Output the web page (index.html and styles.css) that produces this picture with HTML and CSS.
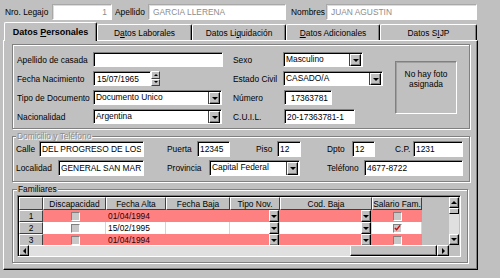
FILE: index.html
```html
<!DOCTYPE html>
<html lang="es">
<head>
  <meta charset="UTF-8" />
  <meta name="viewport" content="width=device-width, initial-scale=1.0"/>
  <title>Legajo - Datos Personales</title>
  <link rel="stylesheet" href="styles.css">
</head>
<body>

  <!-- CABECERA -->
  <div class="header">
    <label class="lbl lbl-legajo">Nro. Legajo</label>
    <input class="field field-off w-legajo" value="1" readonly />
    <label class="lbl lbl-apellido">Apellido</label>
    <input class="field field-off w-apellido" value="GARCIA LLERENA" readonly />
    <label class="lbl lbl-nombres">Nombres</label>
    <input class="field field-off w-nombres" value="JUAN AGUSTIN" readonly />
  </div>

  <!-- SOLAPAS -->
  <div class="tabs">
    <div class="tab active t-personales"><span>Datos <u>P</u>ersonales</span></div>
    <div class="tab t-laborales"><span>D<u>a</u>tos Laborales</span></div>
    <div class="tab t-liquidacion"><span>Datos Li<u>q</u>uidación</span></div>
    <div class="tab t-adicionales"><span><u>D</u>atos Adicionales</span></div>
    <div class="tab t-sijp"><span>Datos S<u>I</u>JP</span></div>
  </div>

  <div class="panel">

    <!-- DATOS GENERALES -->
    <div class="group group-main">
      <div class="col col-left">
        <div class="row">
          <label class="lbl w-lbl-left">Apellido de casada</label>
          <input class="field w-casada" value="" />
        </div>
        <div class="row">
          <label class="lbl w-lbl-left">Fecha Nacimiento</label>
          <input class="field w-fecha" value="15/07/1965" />
          <div class="spin">
            <span class="sbtn up"></span>
            <span class="sbtn down"></span>
          </div>
        </div>
        <div class="row">
          <label class="lbl w-lbl-left">Tipo de Documento</label>
          <div class="combo w-doc"><span>Documento Unico</span><i class="drop"></i></div>
        </div>
        <div class="row">
          <label class="lbl w-lbl-left">Nacionalidad</label>
          <div class="combo w-doc"><span>Argentina</span><i class="drop"></i></div>
        </div>
      </div>

      <div class="col col-right">
        <div class="row">
          <label class="lbl w-lbl-right">Sexo</label>
          <div class="combo w-sexo"><span>Masculino</span><i class="drop"></i></div>
        </div>
        <div class="row">
          <label class="lbl w-lbl-right">Estado Civil</label>
          <div class="combo w-civil"><span>CASADO/A</span><i class="drop"></i></div>
        </div>
        <div class="row">
          <label class="lbl w-lbl-right">Número</label>
          <input class="field w-numero" value="17363781" />
        </div>
        <div class="row">
          <label class="lbl w-lbl-right">C.U.I.L.</label>
          <input class="field w-cuil" value="20-17363781-1" />
        </div>
      </div>

      <div class="photo">No hay foto<br>asignada</div>
    </div>

    <!-- DOMICILIO -->
    <div class="group group-dom">
      <div class="legend off">Domicilio y Teléfono</div>
      <div class="row row-dom">
        <label class="lbl w-calle">Calle</label>
        <input class="field w-calle-in" value="DEL PROGRESO DE LOS" />
        <label class="lbl w-puerta">Puerta</label>
        <input class="field w-puerta-in" value="12345" />
        <label class="lbl w-piso">Piso</label>
        <input class="field w-piso-in" value="12" />
        <label class="lbl w-dpto">Dpto</label>
        <input class="field w-dpto-in" value="12" />
        <label class="lbl w-cp">C.P.</label>
        <input class="field w-cp-in" value="1231" />
      </div>
      <div class="row row-dom">
        <label class="lbl w-localidad">Localidad</label>
        <input class="field w-localidad-in" value="GENERAL SAN MAR" />
        <label class="lbl w-provincia">Provincia</label>
        <div class="combo w-provincia-in"><span>Capital Federal</span><i class="drop"></i></div>
        <label class="lbl w-telefono">Teléfono</label>
        <input class="field w-telefono-in" value="4677-8722" />
      </div>
    </div>

    <!-- FAMILIARES -->
    <div class="group group-fam">
      <div class="legend">Familiares</div>
      <div class="grid">
        <div class="grid-main">
          <div class="grid-body" id="grid-body">
            <div class="grid-row head">
              <div class="cell hcell c0"></div>
              <div class="cell hcell c1">Discapacidad</div>
              <div class="cell hcell c2">Fecha Alta</div>
              <div class="cell hcell c3">Fecha Baja</div>
              <div class="cell hcell c4">Tipo Nov.</div>
              <div class="cell hcell c5">Cod. Baja</div>
              <div class="cell hcell c6">Salario Fam.</div>
            </div>
          </div>
          <div class="vscroll">
            <span class="sb sb-up"></span>
            <span class="sb-thumb-v"></span>
            <span class="sb-track"></span>
            <span class="sb sb-down"></span>
          </div>
        </div>
        <div class="grid-foot">
          <div class="hscroll">
            <span class="sb sb-left"></span>
            <span class="sb-track h-track"></span>
            <span class="sb-thumb-h"></span>
            <span class="sb sb-right"></span>
          </div>
          <div class="corner"></div>
        </div>
      </div>
    </div>

  </div>

  <script>
    const familiares = [
      { nro: 1, alta: '01/04/1994', salario: false, color: 'pink' },
      { nro: 2, alta: '15/02/1995', salario: true, color: 'white' },
      { nro: 3, alta: '01/04/1994', salario: false, color: 'pink' },
    ];

    function checkBox(checked) {
      const mark = checked
        ? '<svg width="8" height="8" viewBox="0 0 8 8"><path d="M1 4 L3 6 L7 1" fill="none" stroke="#e00000" stroke-width="1.6"/></svg>'
        : '';
      return `<span class="check">${mark}</span>`;
    }

    function renderGrid() {
      const body = document.getElementById('grid-body');
      familiares.forEach(f => {
        const row = document.createElement('div');
        row.className = 'grid-row ' + f.color;
        row.innerHTML = `
          <div class="cell hcell c0">${f.nro}</div>
          <div class="cell c1 center">${checkBox(false)}</div>
          <div class="cell c2">${f.alta}</div>
          <div class="cell c3"></div>
          <div class="cell c4 right"><i class="drop"></i></div>
          <div class="cell c5 right"><i class="drop"></i></div>
          <div class="cell c6 center">${checkBox(f.salario)}</div>
        `;
        body.appendChild(row);
      });
    }

    renderGrid();
  </script>

</body>
</html>
```

FILE: styles.css
```css
* {
  box-sizing: border-box;
  margin: 0;
  padding: 0;
}

body {
  font-family: "Liberation Sans", Arial, sans-serif;
  font-size: 8.4px;
  background: #c0c0c0;
  color: #000;
  width: 500px;
  height: 278px;
  overflow: hidden;
}

.lbl {
  white-space: nowrap;
}

/* campos hundidos */
.field {
  height: 15px;
  background: #fff;
  border: 1px solid;
  border-color: #808080 #fff #fff #808080;
  box-shadow: inset 1px 1px #000;
  font: inherit;
  color: #000;
  padding: 0 2px;
  outline: none;
}

.field-off {
  height: 16px;
  border-color: #a8a8a8 #fff #fff #a8a8a8;
  box-shadow: inset 1px 1px #dcdcdc;
  color: #8c8c8c;
  padding: 0 4px;
}

/* HEADER */
.header {
  display: flex;
  align-items: center;
  height: 16px;
  margin-top: 4px;
  padding-left: 5px;
}

.lbl-legajo { width: 47px; }
.w-legajo { width: 60px; text-align: right; }
.lbl-apellido { width: 33px; margin-left: 3px; }
.w-apellido { width: 138px; }
.lbl-nombres { width: 35px; margin-left: 5px; }
.w-nombres { width: 151px; }

/* TABS */
.tabs {
  display: flex;
  align-items: flex-end;
  height: 18px;
  margin-top: 2px;
  padding-left: 4px;
  position: relative;
  z-index: 1;
}

.tab {
  height: 16px;
  display: flex;
  align-items: center;
  justify-content: center;
  background: #c0c0c0;
  border-top: 1px solid #fff;
  border-left: 1px solid #fff;
  border-right: 1px solid #000;
  box-shadow: inset -1px 0 #808080;
  border-radius: 2px 2px 0 0;
  white-space: nowrap;
}

.tab.active {
  height: 19px;
  margin-bottom: -1px;
  font-weight: bold;
  font-size: 9px;
}

.t-personales { width: 93px; }
.t-laborales { width: 95px; }
.t-liquidacion { width: 94px; }
.t-adicionales { width: 94px; }
.t-sijp { width: 97px; }

/* PANEL */
.panel {
  margin-left: 3px;
  width: 475px;
  height: 230px;
  border: 1px solid;
  border-color: #fff #000 #000 #fff;
  box-shadow: inset -1px -1px #808080;
  padding: 3px 0 0 8px;
}

.group {
  width: 458px;
  border: 1px solid #808080;
  box-shadow: inset 1px 1px #fff, 1px 1px #fff;
}

.legend {
  width: fit-content;
  height: 10px;
  line-height: 10px;
  margin-top: -6px;
  padding: 0 1px;
  background: #c0c0c0;
}

.off {
  color: #8c8c8c;
  text-shadow: 1px 1px #fff;
}

.row {
  display: flex;
  align-items: center;
}

/* grupo principal */
.group-main {
  height: 85px;
  display: flex;
  align-items: flex-start;
  padding: 7px 0 0 4px;
}

.col {
  display: flex;
  flex-direction: column;
  gap: 4px;
}

.col .row { height: 15px; }

.w-lbl-left { width: 76px; }
.w-casada { width: 130px; }
.w-fecha { width: 58px; padding-left: 3px; }
.w-doc { width: 129px; }

.col-right { margin-left: 10px; }
.w-lbl-right { width: 50px; }
.w-sexo { width: 80px; }
.w-civil { width: 100px; }
.w-numero { width: 48px; margin-left: 1px; text-align: right; padding-right: 3px; }
.w-cuil { width: 71px; margin-left: 1px; }

.spin {
  width: 9px;
  height: 15px;
  display: flex;
  flex-direction: column;
}

.sbtn {
  flex: 1;
  background: #c0c0c0;
  border: 1px solid;
  border-color: #fff #404040 #404040 #fff;
  display: flex;
  align-items: center;
  justify-content: center;
}

.sbtn.up::after {
  content: "";
  border-left: 2px solid transparent;
  border-right: 2px solid transparent;
  border-bottom: 2px solid #000;
}

.sbtn.down::after {
  content: "";
  border-left: 2px solid transparent;
  border-right: 2px solid transparent;
  border-top: 2px solid #000;
}

/* combos */
.combo {
  height: 15px;
  display: flex;
  background: #fff;
  border: 1px solid;
  border-color: #808080 #fff #fff #808080;
  box-shadow: inset 1px 1px #000;
}

.combo span {
  flex: 1;
  padding-left: 2px;
  line-height: 13px;
  white-space: nowrap;
  overflow: hidden;
}

.drop {
  width: 11px;
  flex-shrink: 0;
  background: #c0c0c0;
  border: 1px solid;
  border-color: #fff #000 #000 #fff;
  box-shadow: inset -1px -1px #808080, -1px 0 #404040;
  display: flex;
  align-items: center;
  justify-content: center;
}

.drop::after {
  content: "";
  border-left: 3px solid transparent;
  border-right: 3px solid transparent;
  border-top: 3px solid #000;
}

.combo .drop { margin: 1px 1px 0 0; height: 12px; }

.photo {
  width: 62px;
  height: 53px;
  margin: 9px 0 0 12px;
  border: 1px solid;
  border-color: #808080 #fff #fff #808080;
  box-shadow: inset 1px 1px #a0a0a0;
  text-align: center;
  line-height: 10px;
  padding-top: 7px;
}

/* domicilio */
.group-dom {
  height: 46px;
  margin-top: 7px;
  padding-left: 3px;
  display: flex;
  flex-direction: column;
  gap: 3px;
}

.group-dom .legend { margin-bottom: -3px; }

.row-dom { height: 16px; }
.row-dom .field, .row-dom .combo { height: 16px; }
.row-dom .combo .drop { height: 13px; }

.w-calle { width: 23px; }
.w-calle-in { width: 105px; }
.w-puerta { width: 30px; margin-left: 23px; }
.w-puerta-in { width: 33px; }
.w-piso { width: 21px; margin-left: 26px; }
.w-piso-in { width: 24px; }
.w-dpto { width: 25px; margin-left: 26px; }
.w-dpto-in { width: 23px; }
.w-cp { width: 18px; margin-left: 20px; }
.w-cp-in { width: 50px; }

.w-localidad { width: 42px; }
.w-localidad-in { width: 86px; }
.w-provincia { width: 42px; margin-left: 23px; }
.w-provincia-in { width: 91px; }
.w-telefono { width: 37px; margin-left: 27px; }
.w-telefono-in { width: 99px; }

/* familiares */
.group-fam {
  width: 456px;
  height: 74px;
  margin-top: 7px;
  padding-left: 4px;
}

.grid {
  width: 444px;
  height: 62px;
  margin-top: 1px;
  border: 1px solid;
  border-color: #808080 #fff #fff #808080;
  box-shadow: inset 1px 1px #000;
  padding: 1px 0 0 1px;
  display: flex;
  flex-direction: column;
}

.grid-main {
  display: flex;
  height: 48px;
}

.grid-body {
  width: 430px;
  overflow: hidden;
  background: #c0c0c0;
}

.grid-row {
  display: flex;
  height: 12px;
}

.grid-row.head { height: 13px; }

.cell {
  height: 100%;
  white-space: nowrap;
  overflow: hidden;
  padding-left: 2px;
  display: flex;
  align-items: center;
}

.grid-row.pink .cell { background: #ff8080; border-right: 1px solid #ff8080; color: #300000; }
.grid-row.white .cell { background: #fff; border-right: 1px solid #d4d4d4; }

.grid-row .hcell,
.grid-row.pink .hcell,
.grid-row.white .hcell {
  background: #c0c0c0;
  border: 1px solid;
  border-color: #fff #404040 #404040 #fff;
  justify-content: center;
  padding: 0;
  color: #000;
}

.center { justify-content: center; }
.right { justify-content: flex-end; }
.grid-row .right { padding: 0; }

.c0 { width: 24px; }
.c1 { width: 63px; }
.c2 { width: 60px; }
.c3 { width: 64px; }
.c4 { width: 50px; }
.c5 { width: 92px; }
.c6 { width: 50px; }

.cell .drop {
  width: 10px;
  height: 12px;
  box-shadow: inset -1px -1px #808080;
}

.check {
  width: 9px;
  height: 9px;
  background: #c8c8c8;
  border: 1px solid;
  border-color: #808080 #fff #fff #808080;
  display: flex;
  align-items: center;
  justify-content: center;
}

/* scrollbars */
.vscroll {
  width: 10px;
  display: flex;
  flex-direction: column;
}

.sb {
  background: #c0c0c0;
  border: 1px solid;
  border-color: #fff #000 #000 #fff;
  box-shadow: inset -1px -1px #808080;
  display: flex;
  align-items: center;
  justify-content: center;
}

.sb-up, .sb-down { height: 11px; }
.sb-left { width: 10px; }
.sb-right { width: 12px; }

.sb-up::after {
  content: "";
  border-left: 3px solid transparent;
  border-right: 3px solid transparent;
  border-bottom: 3px solid #000;
}

.sb-down::after {
  content: "";
  border-left: 3px solid transparent;
  border-right: 3px solid transparent;
  border-top: 3px solid #000;
}

.sb-left::after {
  content: "";
  border-top: 3px solid transparent;
  border-bottom: 3px solid transparent;
  border-right: 3px solid #000;
}

.sb-right::after {
  content: "";
  border-top: 3px solid transparent;
  border-bottom: 3px solid transparent;
  border-left: 3px solid #000;
}

.sb-track {
  flex: 1;
  background: #e0e0e0;
}

.sb-thumb-v {
  height: 6px;
  background: #c0c0c0;
  border: 1px solid;
  border-color: #fff #000 #000 #fff;
}

.grid-foot {
  display: flex;
  height: 11px;
}

.hscroll {
  width: 430px;
  display: flex;
}

.h-track { flex: none; width: 321px; border-top: 1px solid #fff; }

.sb-thumb-h {
  width: 87px;
  background: #c0c0c0;
  border: 1px solid;
  border-color: #fff #000 #000 #fff;
  box-shadow: inset -1px -1px #808080;
}

.corner {
  width: 10px;
  background: #c0c0c0;
}
```
